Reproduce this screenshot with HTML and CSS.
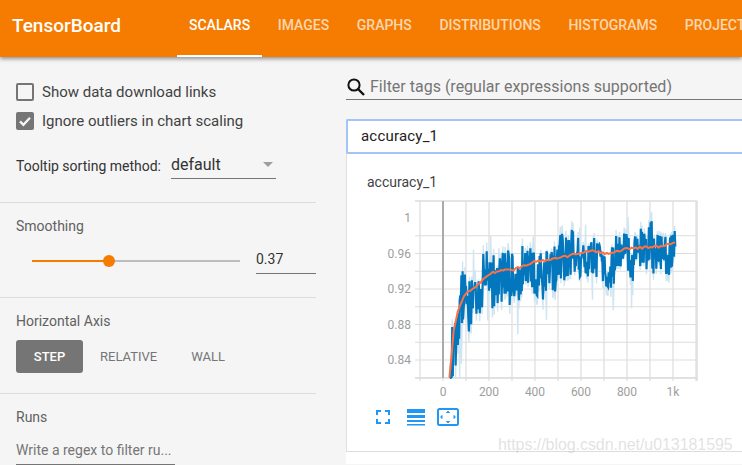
FILE: index.html
```html
<!DOCTYPE html>
<html lang="en">
<head>
  <meta charset="UTF-8" />
  <title>TensorBoard</title>
  <link rel="stylesheet" href="styles.css">
</head>
<body>
  <header class="topbar">
    <div class="brand">TensorBoard</div>
    <nav class="tabs">
      <a class="tab active">SCALARS</a>
      <a class="tab">IMAGES</a>
      <a class="tab">GRAPHS</a>
      <a class="tab">DISTRIBUTIONS</a>
      <a class="tab">HISTOGRAMS</a>
      <a class="tab">PROJECTOR</a>
    </nav>
  </header>

  <div class="content">
    <aside class="sidebar">
      <section class="sec sec-options">
        <label class="check"><span class="box"></span>Show data download links</label>
        <label class="check"><span class="box checked">
          <svg width="14" height="14" viewBox="0 0 14 14"><path d="M2 7.4 5.4 10.8 12 3.8" fill="none" stroke="#f5f5f5" stroke-width="2.4"/></svg>
        </span>Ignore outliers in chart scaling</label>
        <div class="tooltip-row">
          <span class="tooltip-label">Tooltip sorting method:</span>
          <div class="select"><span>default</span><i class="caret"></i></div>
        </div>
      </section>

      <section class="sec sec-smooth">
        <div class="sec-title">Smoothing</div>
        <div class="slider-row">
          <div class="slider">
            <div class="slider-on"></div>
            <div class="slider-off"></div>
            <div class="knob"></div>
          </div>
          <div class="slider-value">0.37</div>
        </div>
      </section>

      <section class="sec sec-axis">
        <div class="sec-title">Horizontal Axis</div>
        <div class="axis-btns">
          <button class="axis-btn active">STEP</button>
          <button class="axis-btn relative">RELATIVE</button>
          <button class="axis-btn wall">WALL</button>
        </div>
      </section>

      <section class="sec sec-runs">
        <div class="sec-title">Runs</div>
        <div class="runs-input">Write a regex to filter ru...</div>
      </section>
    </aside>

    <main class="main">
      <div class="filter">
        <svg class="search" width="20" height="20" viewBox="0 0 20 20">
          <circle cx="8" cy="8" r="5.6" fill="none" stroke="#111" stroke-width="2"/>
          <path d="M12 12 18 18" stroke="#111" stroke-width="2.4"/>
        </svg>
        <span>Filter tags (regular expressions supported)</span>
      </div>

      <div class="tag-bar">accuracy_1</div>

      <div class="card">
        <div class="card-title">accuracy_1</div>
        <svg id="chart" class="chart" width="330" height="205" viewBox="370 195 330 205"></svg>
        <div class="chart-btns">
          <svg width="14" height="14" viewBox="0 0 14 14">
            <path d="M1 5V1H5M9 1H13V5M13 9V13H9M5 13H1V9" fill="none" stroke="#2196f3" stroke-width="2"/>
          </svg>
          <svg class="lines-icon" width="18" height="17" viewBox="0 0 18 17">
            <path d="M0 0H18V4H0ZM0 6H18V9H0ZM0 11H18V13H0ZM0 15H18V16.5H0Z" fill="#2196f3"/>
          </svg>
          <svg class="fit-icon" width="22" height="18" viewBox="0 0 22 18">
            <rect x="1" y="1" width="20" height="16" rx="1.5" fill="none" stroke="#2196f3" stroke-width="2"/>
            <path d="M9.500 4.500H12.500L11 3.200ZM9.500 13.500H12.500L11 14.800ZM5 7.500V10.500L3.700 9ZM17 7.500V10.500L18.300 9Z" fill="#2196f3" stroke="#2196f3"/>
          </svg>
        </div>
      </div>
      <div class="card-next"></div>
    </main>
  </div>

  <div class="watermark">https://blog.csdn.net/u013181595</div>

  <script src="chart.js"></script>
</body>
</html>
```

FILE: styles.css
```css
html, body {
  margin: 0;
  height: 465px;
  overflow: hidden;
}
body {
  font-family: Roboto, sans-serif;
  background: #f5f5f5;
  color: #424242;
  position: relative;
}
.topbar {
  height: 57px;
  background: #f57c00;
  box-shadow: 0 2px 4px rgba(0, 0, 0, 0.4);
  display: flex;
  position: relative;
  z-index: 2;
  white-space: nowrap;
  overflow: hidden;
}
.brand {
  width: 177px;
  flex: none;
  box-sizing: border-box;
  padding-left: 12px;
  font-size: 19px;
  font-weight: 500;
  line-height: 51px;
  color: #fff;
}
.tabs {
  display: flex;
  gap: 3.6px;
}
.tab {
  padding: 0 12px;
  height: 57px;
  box-sizing: border-box;
  line-height: 51px;
  font-size: 14px;
  font-weight: 500;
  color: rgba(255, 255, 255, 0.7);
}
.tab.active {
  color: #fff;
  border-bottom: 2px solid #fff;
}
.content {
  display: flex;
  height: 408px;
}
.sidebar {
  width: 316px;
  flex: none;
  margin-right: 30px;
}
.sec {
  padding-left: 16px;
  border-bottom: 1px solid #dcdcdc;
  font-size: 14px;
}
.sec-options {
  padding-top: 26px;
  padding-bottom: 23px;
}
.sec-smooth {
  padding-top: 13px;
  padding-bottom: 23px;
}
.sec-axis {
  padding-top: 13px;
  padding-bottom: 20px;
}
.sec-runs {
  padding-top: 13px;
  border-bottom: none;
}
.sec-title {
  line-height: 20px;
  color: #616161;
}
.check {
  display: flex;
  align-items: center;
  gap: 8px;
  height: 18px;
  margin-bottom: 11px;
  font-size: 15px;
  color: #424242;
}
.box {
  width: 18px;
  height: 18px;
  box-sizing: border-box;
  border: 2px solid #757575;
  border-radius: 2px;
  display: flex;
  align-items: center;
  justify-content: center;
}
.box.checked {
  background: #757575;
}
.tooltip-row {
  display: flex;
  align-items: flex-end;
  margin-top: 20px;
}
.tooltip-label {
  color: #333;
  line-height: 22px;
  margin-bottom: 2px;
  width: 155px;
}
.select {
  width: 105px;
  height: 29px;
  box-sizing: border-box;
  border-bottom: 1px solid #757575;
  display: flex;
  align-items: center;
  justify-content: space-between;
  font-size: 16px;
  color: #333;
  padding-right: 3px;
}
.caret {
  width: 0;
  height: 0;
  border-left: 5px solid transparent;
  border-right: 5px solid transparent;
  border-top: 5px solid #9e9e9e;
}
.slider-row {
  display: flex;
  margin-top: 8px;
  height: 30px;
}
.slider {
  width: 208px;
  margin-left: 16px;
  margin-right: 16px;
  display: flex;
  align-items: center;
  position: relative;
  height: 34px;
}
.slider-on {
  width: 77px;
  height: 2px;
  background: #f57c00;
}
.slider-off {
  flex: 1;
  height: 2px;
  background: #bdbdbd;
}
.knob {
  position: absolute;
  left: 71px;
  top: 11px;
  width: 12px;
  height: 12px;
  border-radius: 50%;
  background: #f57c00;
}
.slider-value {
  width: 60px;
  height: 30px;
  box-sizing: border-box;
  border-bottom: 1px solid #757575;
  line-height: 30px;
  color: #333;
}
.axis-btns {
  display: flex;
  margin-top: 9px;
}
.axis-btn {
  height: 33px;
  border: none;
  background: none;
  padding: 0;
  font-family: inherit;
  font-size: 13px;
  color: #757575;
}
.axis-btn.active {
  width: 67px;
  background: #757575;
  color: #fff;
  font-weight: 500;
  border-radius: 3px;
}
.axis-btn.relative {
  margin-left: 17px;
}
.axis-btn.wall {
  margin-left: 34px;
}
.runs-input {
  width: 159px;
  height: 28px;
  margin-top: 10px;
  box-sizing: border-box;
  border-bottom: 1px solid #757575;
  line-height: 26px;
  color: #757575;
  white-space: nowrap;
  overflow: hidden;
}
.main {
  flex: 1;
  min-width: 0;
}
.filter {
  height: 43px;
  box-sizing: border-box;
  border-bottom: 1px solid #757575;
  padding-top: 17px;
  display: flex;
  align-items: center;
  gap: 4px;
  font-size: 16px;
  color: #757575;
  white-space: nowrap;
}
.search {
  flex: none;
}
.tag-bar {
  margin-top: 19px;
  height: 35px;
  box-sizing: border-box;
  background: #fff;
  border: 2px solid #a4c4f9;
  border-right: none;
  border-radius: 2px 0 0 2px;
  padding-left: 13px;
  line-height: 31px;
  font-size: 15px;
  letter-spacing: 0.2px;
  color: #212121;
}
.card {
  height: 298px;
  box-sizing: border-box;
  background: #fff;
  border-left: 1px solid #e0e0e0;
  border-bottom: 1px solid #ddd;
  padding-left: 20px;
  padding-top: 19px;
}
.card-title {
  font-size: 14px;
  line-height: 18px;
  color: #424242;
}
.chart {
  display: block;
  margin-left: 3px;
  margin-top: 4px;
}
.chart-btns {
  display: flex;
  align-items: center;
  gap: 17px;
  margin-left: 9px;
  margin-top: 8px;
}
.chart-btns .fit-icon {
  margin-left: -5px;
}
.card-next {
  height: 12px;
  background: #fff;
}
.chart text {
  font-family: Roboto, sans-serif;
  font-size: 12px;
  fill: #9e9e9e;
}
.watermark {
  position: absolute;
  left: 498px;
  top: 436px;
  font-family: "Liberation Sans", sans-serif;
  font-size: 16px;
  letter-spacing: -0.06px;
  color: rgba(190, 190, 190, 0.45);
  z-index: 3;
  white-space: nowrap;
}
```

FILE: chart.js
```js
// draws the accuracy_1 scalar chart into #chart
const svg = document.getElementById('chart');
const NS = 'http://www.w3.org/2000/svg';

const x0 = 443, xPerStep = 0.23;
const y1 = 218, yPerUnit = 887.5;
const plotLeft = 415, plotRight = 697, plotTop = 201, plotBottom = 378;

const sx = (s) => x0 + s * xPerStep;
const sy = (v) => Math.min(plotBottom, Math.max(plotTop, y1 + (1 - v) * yPerUnit));

function add(tag, attrs, text) {
  const el = document.createElementNS(NS, tag);
  Object.keys(attrs).forEach((k) => el.setAttribute(k, attrs[k]));
  if (text) el.textContent = text;
  svg.appendChild(el);
}

function line(ax, ay, bx, by, color, width) {
  add('line', { x1: ax, y1: ay, x2: bx, y2: by, stroke: color, 'stroke-width': width });
}

// grid
for (let s = -100; s <= 1100; s += 100) {
  line(sx(s), plotTop, sx(s), plotBottom + 3, '#ddd', 1.2);
}
for (let v = 0.82; v < 1.0; v += 0.02) {
  line(plotLeft, sy(v), plotRight, sy(v), '#ddd', 1.2);
}
line(plotLeft, plotTop, plotRight, plotTop, '#ddd', 1.5);
line(plotLeft, plotBottom, plotRight, plotBottom, '#ddd', 1.5);
line(plotRight, plotTop, plotRight, plotBottom + 3, '#ddd', 1.5);
line(sx(0), plotTop, sx(0), plotBottom, '#aaa', 2);

// axis labels
[[1, '1'], [0.96, '0.96'], [0.92, '0.92'], [0.88, '0.88'], [0.84, '0.84']].forEach((t) => {
  add('text', { x: 411, y: sy(t[0]) + 4, 'text-anchor': 'end' }, t[1]);
});
[[0, '0'], [200, '200'], [400, '400'], [600, '600'], [800, '800'], [1000, '1k']].forEach((t) => {
  add('text', { x: sx(t[0]), y: 396, 'text-anchor': 'middle' }, t[1]);
});

// smoothed curve, read off the picture
const curve = [
  [28, 0.82], [36, 0.84], [45, 0.87], [60, 0.89], [75, 0.903], [100, 0.915], [130, 0.921],
  [150, 0.925], [200, 0.937], [250, 0.941], [300, 0.941], [350, 0.946], [400, 0.951],
  [470, 0.953], [540, 0.957], [600, 0.961], [650, 0.964], [700, 0.96], [760, 0.962],
  [800, 0.966], [900, 0.967], [950, 0.968], [1005, 0.972]
];

function smooth(s) {
  for (let i = 1; i < curve.length; i++) {
    if (s <= curve[i][0]) {
      const a = curve[i - 1], b = curve[i];
      return a[1] + (b[1] - a[1]) * (s - a[0]) / (b[0] - a[0]);
    }
  }
  return curve[curve.length - 1][1];
}

// fixed seed so the noise comes out the same every time
let seed = 48271;
function rnd() {
  seed = (seed * 16807) % 2147483647;
  return seed / 2147483647;
}

let raw = [], light = [], orange = [];
let drift = 0;
for (let s = 30; s <= 1010; s += 2.5) {
  const spread = 0.02 + 0.012 * Math.exp(-s / 200);
  const mid = smooth(s) - 0.005;
  // fast jitter on top of a slower wander, so the band looks lumpy
  drift = 0.75 * drift + (rnd() - 0.5) * 0.7;
  const n = (rnd() - 0.5) * 2.4 + drift;
  raw.push(sx(s).toFixed(1) + ',' + sy(mid + n * spread).toFixed(1));
  // the unsmoothed series spreads a bit wider, with thin outliers
  let m = n * 1.3;
  if (rnd() < 0.1) m = (rnd() - 0.62) * 5.5;
  light.push(sx(s).toFixed(1) + ',' + sy(mid + m * spread).toFixed(1));
}
for (let s = 28; s <= 1010; s += 9) {
  orange.push(sx(s).toFixed(1) + ',' + sy(smooth(s) + (rnd() - 0.5) * 0.0025).toFixed(1));
}

add('polyline', { points: light.join(' '), fill: 'none', stroke: '#cfe5f1', 'stroke-width': 1.4 });
add('polyline', { points: raw.join(' '), fill: 'none', stroke: '#0277bd', 'stroke-width': 2.2 });
add('polyline', { points: orange.join(' '), fill: 'none', stroke: '#ff7043', 'stroke-width': 2, 'stroke-linejoin': 'round' });
```
